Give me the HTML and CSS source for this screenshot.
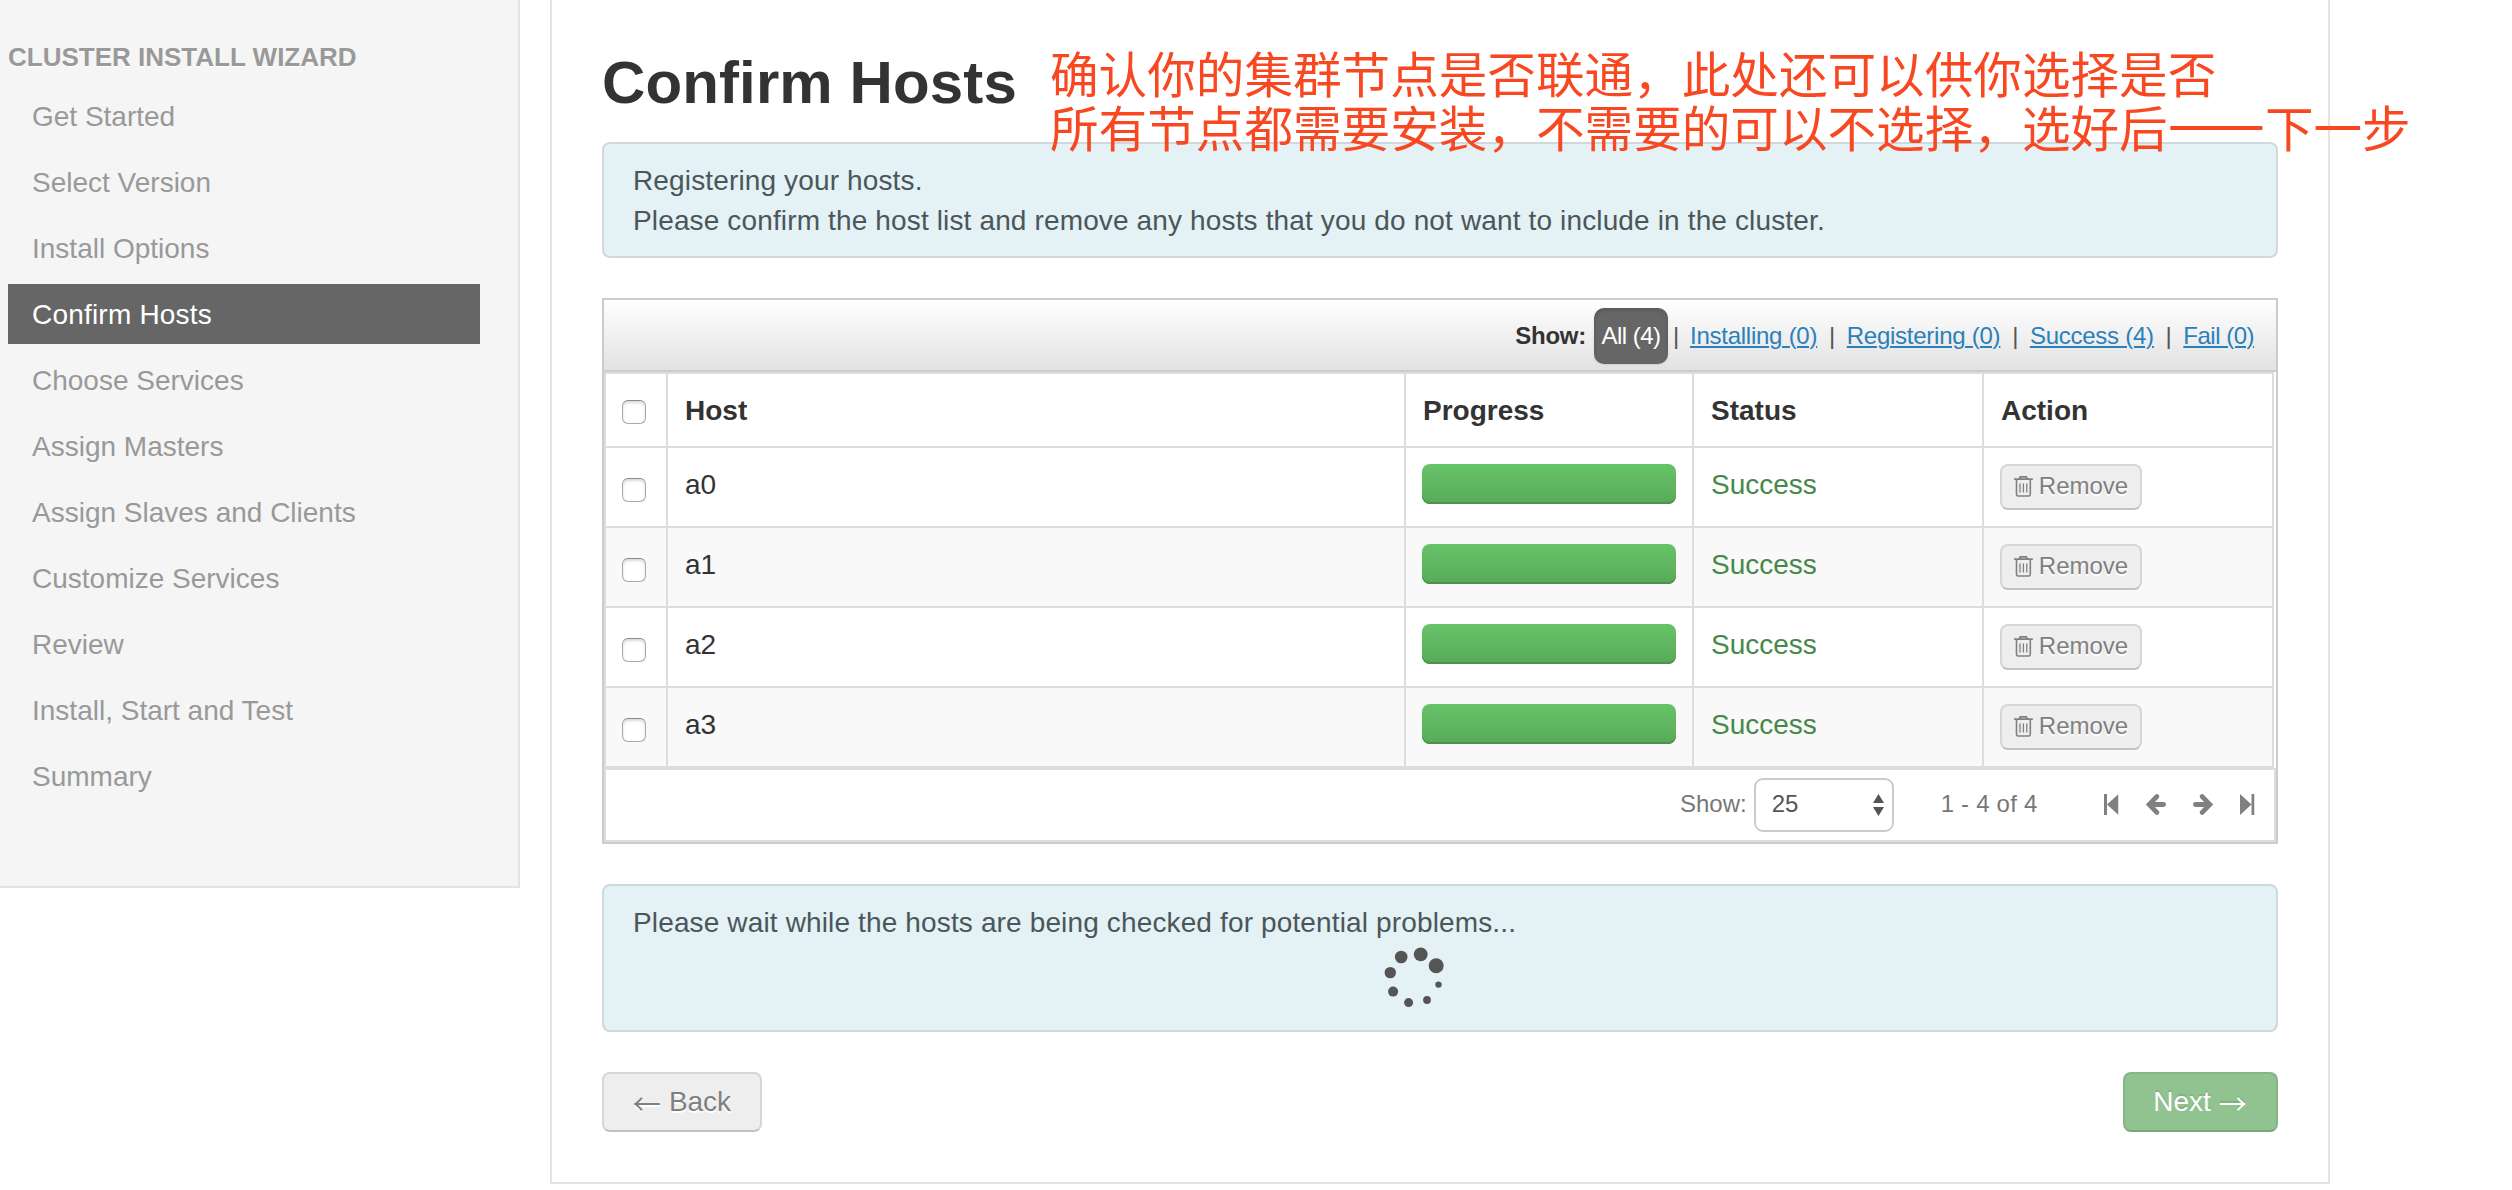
FILE: index.html
```html
<!DOCTYPE html>
<html lang="en">
<head>
<meta charset="utf-8">
<title>Cluster Install Wizard</title>
<link rel="stylesheet" href="styles.css">
</head>
<body>
<svg width="0" height="0" class="defs" aria-hidden="true">
  <symbol id="trash" viewBox="0 0 19 21">
    <g fill="none" stroke="currentColor" stroke-width="1.6">
      <path d="M0 3.1H18.8M5.3 2.9L6.1 .9H12.5L13.3 2.9M2.5 3.3V18.4Q2.5 20 4.1 20H14.7Q16.3 20 16.3 18.4V3.3"/>
      <path d="M6 7.6V16.4M9.4 7.6V16.4M12.8 7.6V16.4" stroke-width="1.3"/>
    </g>
  </symbol>
  <symbol id="first" viewBox="0 0 14.5 21"><path fill="currentColor" d="M0 0H3V21H0ZM14.5 0V21L3 10.5Z"/></symbol>
  <symbol id="arrow" viewBox="0 0 20 21"><path fill="none" stroke="currentColor" stroke-width="4.8" stroke-linecap="round" d="M10.8 2.6L3.2 10.5L10.8 18.4M4 10.5H17.6"/></symbol>
</svg>
<div class="page">
  <nav class="sidebar">
    <h5 class="sidebar-title">CLUSTER INSTALL WIZARD</h5>
    <ul class="steps">
      <li>Get Started</li>
      <li>Select Version</li>
      <li>Install Options</li>
      <li class="active">Confirm Hosts</li>
      <li>Choose Services</li>
      <li>Assign Masters</li>
      <li>Assign Slaves and Clients</li>
      <li>Customize Services</li>
      <li>Review</li>
      <li>Install, Start and Test</li>
      <li>Summary</li>
    </ul>
  </nav>
  <main class="content">
    <h2 class="title">Confirm Hosts</h2>
    <div class="alert">
      <p>Registering your hosts.</p>
      <p>Please confirm the host list and remove any hosts that you do not want to include in the cluster.</p>
    </div>
    <section class="hosts">
      <div class="filters">
        <b>Show:</b><a class="pill">All (4)</a><i>|</i><a>Installing (0)</a><i>|</i><a>Registering (0)</a><i>|</i><a>Success (4)</a><i>|</i><a class="fail">Fail (0)</a>
      </div>
      <div class="table">
        <div class="row head"><div><span class="check"></span></div><div>Host</div><div>Progress</div><div>Status</div><div>Action</div></div>
        <div class="row"><div><span class="check"></span></div><div>a0</div><div><div class="bar"></div></div><div class="ok">Success</div><div><button class="remove"><svg><use href="#trash"/></svg>Remove</button></div></div>
        <div class="row"><div><span class="check"></span></div><div>a1</div><div><div class="bar"></div></div><div class="ok">Success</div><div><button class="remove"><svg><use href="#trash"/></svg>Remove</button></div></div>
        <div class="row"><div><span class="check"></span></div><div>a2</div><div><div class="bar"></div></div><div class="ok">Success</div><div><button class="remove"><svg><use href="#trash"/></svg>Remove</button></div></div>
        <div class="row"><div><span class="check"></span></div><div>a3</div><div><div class="bar"></div></div><div class="ok">Success</div><div><button class="remove"><svg><use href="#trash"/></svg>Remove</button></div></div>
      </div>
      <div class="pager">
        <span class="label">Show:</span>
        <div class="select"><span class="label">25</span><svg width="11" height="22" viewBox="0 0 11 22"><path fill="#555" d="M5.5 0L11 9H0ZM0 13H11L5.5 22Z"/></svg></div>
        <span class="label range">1 - 4 of 4</span>
        <div class="nav">
          <svg width="14.5" height="21"><use href="#first"/></svg>
          <svg width="20" height="21"><use href="#arrow"/></svg>
          <svg class="flip" width="20" height="21"><use href="#arrow"/></svg>
          <svg class="flip" width="14.5" height="21"><use href="#first"/></svg>
        </div>
      </div>
    </section>
    <div class="alert checking">
      <p>Please wait while the hosts are being checked for potential problems...</p>
      <svg class="spinner" width="62" height="62" viewBox="1384 946 62 62" fill="#555">
        <circle cx="1436.2" cy="965.7" r="7.5"/><circle cx="1420.7" cy="954.3" r="6.9"/><circle cx="1401.2" cy="957" r="6.3"/><circle cx="1390.3" cy="972.6" r="5.7"/><circle cx="1393.1" cy="991.6" r="5"/><circle cx="1408.6" cy="1002.6" r="4.5"/><circle cx="1427" cy="1000" r="3.9"/><circle cx="1438.5" cy="984.6" r="3.2"/>
      </svg>
    </div>
    <div class="actions">
      <button class="btn"><span class="arr">←</span>Back</button>
      <button class="btn next">Next<span class="arr">→</span></button>
    </div>
  </main>
</div>
<div class="note" lang="zh">确认你的集群节点是否联通，此处还可以供你选择是否<br>所有节点都需要安装，不需要的可以不选择，选好后<span class="dash">——</span>下一步</div>
</body>
</html>
```
FILE: styles.css
```css
* { box-sizing: border-box; }
body { margin: 0; background: #fff; color: #333; font: 28px/40px "Liberation Sans", Arial, sans-serif; width: 2512px; height: 1190px; overflow: hidden; }
h2, h5, p, ul { margin: 0; padding: 0; }
.defs { position: absolute; }
.page { display: flex; align-items: flex-start; gap: 30px; }

.sidebar { width: 520px; height: 888px; padding: 37px 38px 0 8px; background: #f5f5f5; border-right: 2px solid #e3e3e3; border-bottom: 2px solid #e3e3e3; }
.sidebar-title { font-size: 26px; line-height: 40px; color: #999; text-shadow: 0 1px 0 #fff; }
.steps { list-style: none; margin-top: 9px; display: flex; flex-direction: column; gap: 6px; }
.steps li { height: 60px; line-height: 62px; padding-left: 24px; color: #999; }
.steps .active { background: #666; color: #fff; letter-spacing: 0.2px; }

.content { width: 1780px; height: 1184px; border: 2px solid #e3e3e3; border-top: 0; padding: 42px 50px 0; }
.title { width: fit-content; height: 100px; font-size: 60px; line-height: 82px; letter-spacing: 0.12px; }
.alert { height: 116px; padding: 17px 28px 0 29px; background: #e4f1f5; border: 2px solid #cfd8dc; border-radius: 8px; color: #4b565b; letter-spacing: 0.14px; }
.checking { height: 148px; margin-top: 40px; }
.spinner { display: block; margin: 3px auto 0; position: relative; left: -26px; }

.hosts { margin-top: 40px; height: 546px; border: 2px solid #ccc; }
.filters { height: 72px; border-bottom: 2px solid #ccc; background: linear-gradient(#fff, #e2e2e2); display: flex; align-items: center; justify-content: flex-end; padding: 2px 22px 0 0; font-size: 24px; letter-spacing: -0.25px; }
.filters b { margin-right: 8px; }
.filters a { color: #2a80bb; text-decoration: underline; text-decoration-thickness: 2px; text-underline-offset: 2px; white-space: nowrap; }
.filters i { font-style: normal; width: 29.5px; text-align: center; color: #555; }
.filters .pill { width: 74px; background: #666; color: #fff; border-radius: 10px; height: 56px; line-height: 56px; text-align: center; text-decoration: none; letter-spacing: -0.5px; box-shadow: inset 0 2px 4px rgba(0,0,0,.15), 0 1px 2px rgba(0,0,0,.1); }
.filters .pill + i { width: 22px; padding-right: 6px; }
.filters .fail { letter-spacing: -0.5px; }
.table { width: 1670px; border: 2px solid #ddd; }
.row { display: grid; grid-template-columns: 60px 738px 288px 290px 290px; height: 80px; border-bottom: 2px solid #ddd; }
.row > div { padding: 16px 16px 0; border-left: 2px solid #ddd; }
.row > div:nth-child(2), .row > .ok { padding: 17px 16px 0 17px; }
.row > div:first-child { border-left: 0; padding-top: 30px; }
.row.head { height: 74px; font-weight: bold; }
.row.head > div { padding: 17px 16px 0 17px; }
.row.head > div:first-child { padding: 26px 16px 0; }
.row:nth-child(odd):not(.head) { background: #f9f9f9; }
.row:last-child { border-bottom: 0; height: 78px; }
.check { display: block; width: 24px; height: 24px; border: 1.5px solid #a9a9a9; border-top-color: #8a8a8a; border-radius: 6px; background: #fff; box-shadow: inset 0 2px 3px rgba(0,0,0,.15); }
.bar { height: 40px; width: 254px; border-radius: 8px; background: linear-gradient(#66c468, #5aa95a); box-shadow: inset 0 -2px 0 #4d914d; }
.ok { color: #468847; }
button { font-family: inherit; margin: 0; }
.remove { display: flex; align-items: center; justify-content: center; gap: 6px; width: 142px; height: 46px; padding: 0 0 2px; font-size: 24px; color: #808080; background: #eee; border: 2px solid #d6d6d6; border-bottom-color: #c2c2c2; border-radius: 8px; text-shadow: 0 2px 1px #fff; }
.remove svg { width: 19px; height: 21px; }

.pager { width: 1672px; height: 74px; border: 2px solid #ddd; display: flex; align-items: center; font-size: 24px; color: #777; padding-left: 1074px; }
.select { margin-left: 7px; width: 140px; height: 54px; border: 2px solid #ccc; border-radius: 9px; display: flex; align-items: center; justify-content: space-between; padding: 0 8px 0 16px; color: #555; background: #fff; }
.label { padding-bottom: 2px; }
.range { margin-left: 47px; letter-spacing: 0.2px; }
.nav { margin: 0 20px 2px auto; display: flex; gap: 27px; color: #808080; }
.flip { transform: scaleX(-1); }

.actions { margin-top: 40px; display: flex; justify-content: space-between; }
.btn { display: flex; align-items: center; justify-content: center; gap: 8px; height: 60px; width: 160px; padding: 0; font-size: 28px; color: #808080; background: #eee; border: 2px solid #d6d6d6; border-bottom-color: #c2c2c2; border-radius: 8px; text-shadow: 0 2px 1px #fff; }
.next { width: 155px; padding-right: 1px; color: #fff; background: #91c391; border-color: #86b486; border-bottom-color: #7da47d; text-shadow: 0 -2px 0 #84b084; }
.arr { font: 28px/40px "Noto Sans CJK SC", sans-serif; padding-top: 2px; }

.note { position: absolute; left: 1050px; top: 46px; font: 48.6px/53.5px "Noto Sans CJK SC", sans-serif; color: #f84822; white-space: nowrap; }
.dash { -webkit-text-stroke: 1.8px #f84822; }
```
